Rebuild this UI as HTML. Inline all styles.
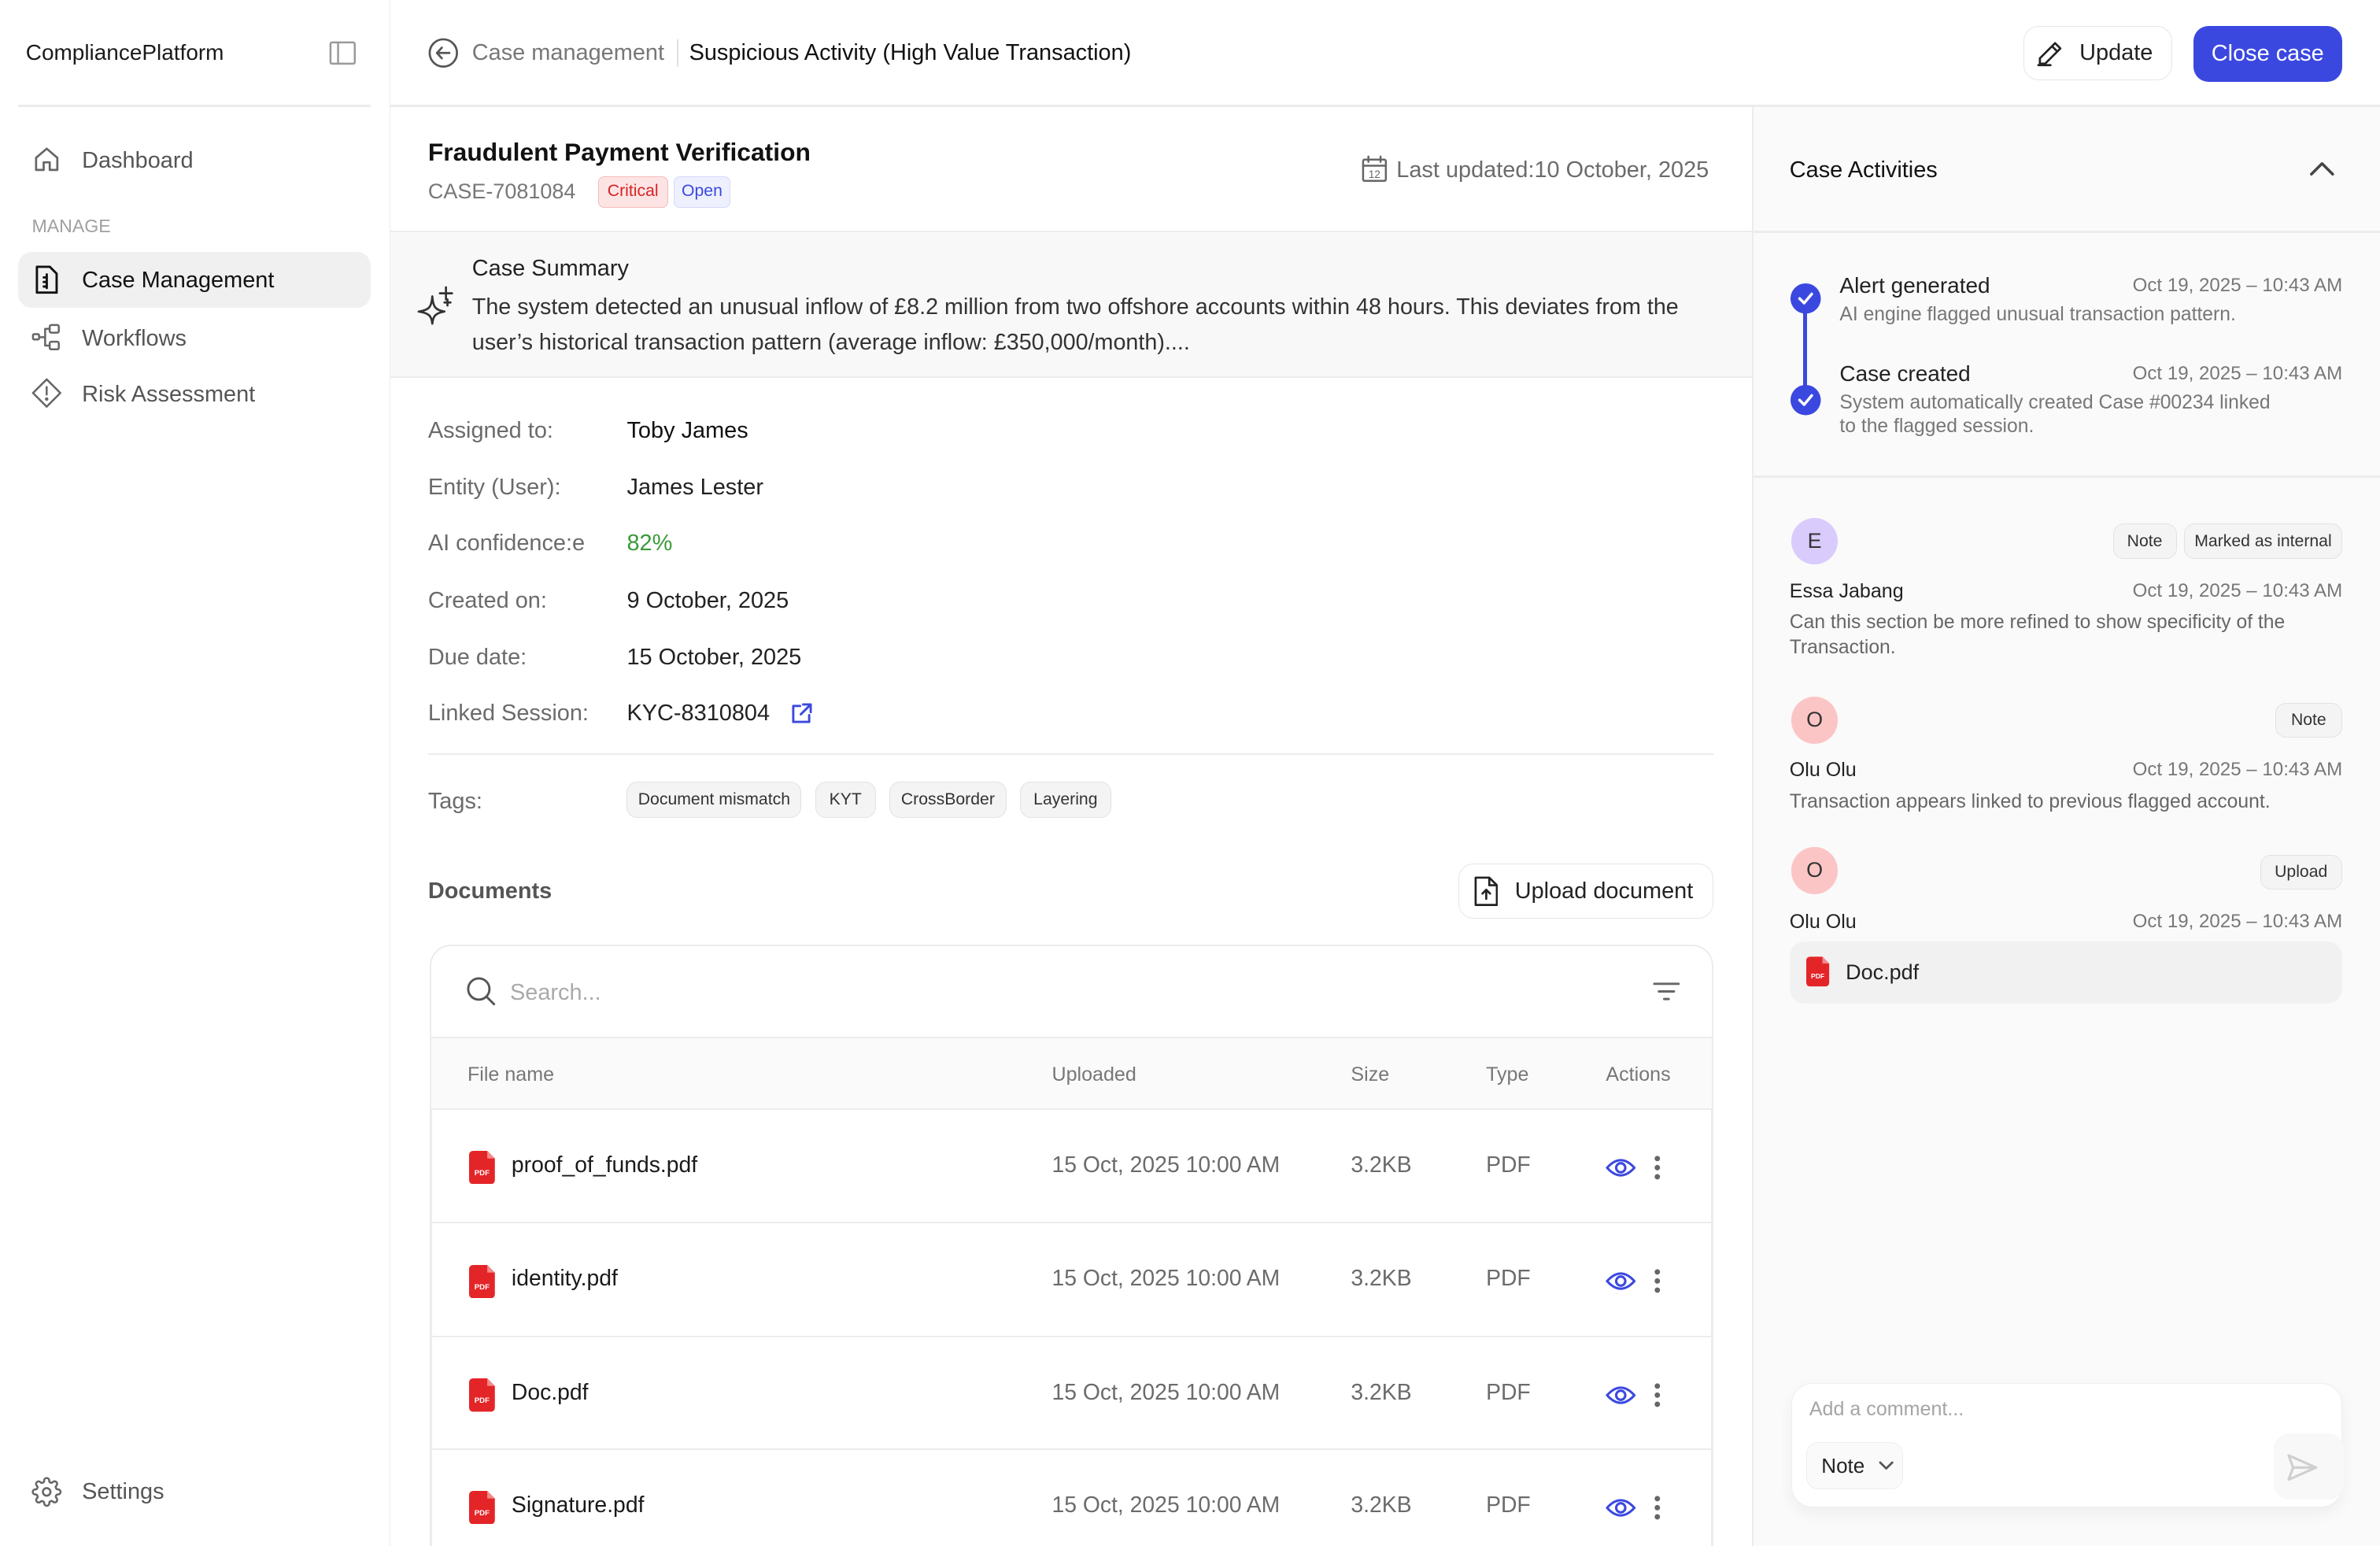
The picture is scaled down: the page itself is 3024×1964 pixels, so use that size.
<!DOCTYPE html>
<html><head><meta charset="utf-8"><style>
*{box-sizing:border-box;margin:0;padding:0}
html,body{width:3024px;height:1964px;overflow:hidden;background:#fff}
body{font-family:"Liberation Sans",sans-serif;color:#1a1a1a}
#r{zoom:1.92857;width:1568px;height:1019px;position:relative;overflow:hidden}
.a{position:absolute;white-space:nowrap}
.g{color:#6b6b6b}
.ts{font-size:12.5px !important}
.pill{position:absolute;border:1px solid #e2e2e2;background:#f4f4f4;border-radius:7px;font-size:11px;color:#333;display:flex;align-items:center;justify-content:center}
svg{position:absolute;fill:none;stroke-linecap:round;stroke-linejoin:round}
.row{position:absolute;left:283px;width:846px;height:75px;border-top:1.5px solid #ececec;background:#fff}
.row .a{top:0;line-height:73px;font-size:14.7px}
</style></head><body><div id="r">

<!-- sidebar -->
<div class="a" style="left:0;top:0;width:257px;height:1019px;border-right:1px solid #ececec"></div>
<div class="a" style="left:17px;top:25px;font-size:14.5px;line-height:20px;font-weight:500">CompliancePlatform</div>
<svg style="left:217px;top:27px" width="18" height="16" viewBox="0 0 18 16" stroke="#9a9a9a" stroke-width="1.3"><rect x="1" y="1" width="16" height="14" rx="1"/><line x1="6" y1="1" x2="6" y2="15"/></svg>
<div class="a" style="left:12px;top:69px;width:232px;height:1.5px;background:#ececec"></div>
<svg style="left:22px;top:96px" width="18" height="18" viewBox="0 0 18 18" stroke="#666" stroke-width="1.4"><path d="M2 8 L9 2 L16 8 V16 H11 V11 H7 V16 H2 Z"/></svg>
<div class="a g" style="left:54px;top:96px;font-size:15px;line-height:20px;color:#555">Dashboard</div>
<div class="a" style="left:21px;top:142px;font-size:12px;line-height:14px;color:#a0a0a0">MANAGE</div>
<div class="a" style="left:12px;top:166px;width:232px;height:37px;background:#f0f0f0;border-radius:9px"></div>
<svg style="left:23px;top:175px" width="16" height="19" viewBox="0 0 16 19" stroke="#111" stroke-width="1.5"><path d="M1.5 1 H10 L14.5 5.5 V18 H1.5 Z"/><path d="M8 6 V15 M6 8 H8 M6 11 H8 M6 14 H8"/></svg>
<div class="a" style="left:54px;top:175px;font-size:15px;line-height:20px;color:#111">Case Management</div>
<svg style="left:21px;top:213px" width="20" height="18" viewBox="0 0 20 18" stroke="#666" stroke-width="1.3"><rect x="1" y="7" width="4" height="3.5" rx="0.8"/><rect x="12" y="1" width="6" height="5" rx="1"/><rect x="12" y="12" width="6" height="5" rx="1"/><path d="M5 9 H9 M9 3.5 V14.5 M9 3.5 H12 M9 14.5 H12"/></svg>
<div class="a" style="left:54px;top:213px;font-size:15px;line-height:20px;color:#555">Workflows</div>
<svg style="left:21px;top:249px" width="20" height="20" viewBox="0 0 20 20" stroke="#666" stroke-width="1.3"><path d="M10 1 L19 10 L10 19 L1 10 Z"/><path d="M10 6 V11"/><circle cx="10" cy="14" r="0.5" fill="#666"/></svg>
<div class="a" style="left:54px;top:250px;font-size:15px;line-height:20px;color:#555">Risk Assessment</div>
<svg style="left:21px;top:973px" width="20" height="20" viewBox="0 0 24 24" stroke="#666" stroke-width="1.6"><circle cx="12" cy="12" r="3"/><path d="M19.4 15a1.65 1.65 0 0 0 .33 1.820l.06.06a2 2 0 1 1-2.83 2.83l-.06-.06a1.65 1.65 0 0 0-1.82-.33 1.65 1.65 0 0 0-1 1.51V21a2 2 0 1 1-4 0v-.09A1.65 1.65 0 0 0 9 19.4a1.65 1.65 0 0 0-1.82.33l-.06.06a2 2 0 1 1-2.83-2.83l.06-.06A1.65 1.65 0 0 0 4.68 15a1.65 1.65 0 0 0-1.51-1H3a2 2 0 1 1 0-4h.09A1.65 1.65 0 0 0 4.6 9a1.65 1.65 0 0 0-.33-1.82l-.06-.06a2 2 0 1 1 2.83-2.83l.06.06A1.65 1.65 0 0 0 9 4.68 1.65 1.65 0 0 0 10 3.17V3a2 2 0 1 1 4 0v.09a1.65 1.65 0 0 0 1 1.51 1.65 1.65 0 0 0 1.82-.33l.06-.06a2 2 0 1 1 2.83 2.83l-.06.06A1.65 1.65 0 0 0 19.4 9a1.65 1.65 0 0 0 1.51 1H21a2 2 0 1 1 0 4h-.09a1.65 1.65 0 0 0-1.51 1z"/></svg>
<div class="a" style="left:54px;top:973px;font-size:15px;line-height:20px;color:#555">Settings</div>

<!-- header -->
<div class="a" style="left:257px;top:69px;width:1311px;height:1.5px;background:#ececec"></div>
<svg style="left:282px;top:25px" width="20" height="20" viewBox="0 0 20 20" stroke="#555" stroke-width="1.4"><circle cx="10" cy="10" r="9"/><path d="M14 10 H6 M9 6.5 L5.8 10 L9 13.5"/></svg>
<div class="a" style="left:311px;top:25px;font-size:15px;line-height:20px;color:#777">Case management</div>
<div class="a" style="left:446px;top:26px;width:1px;height:18px;background:#e0e0e0"></div>
<div class="a" style="left:454px;top:25px;font-size:15px;line-height:20px;color:#111">Suspicious Activity (High Value Transaction)</div>
<div class="a" style="left:1333px;top:17px;width:98px;height:36px;border:1px solid #e6e6e6;border-radius:10px"></div>
<svg style="left:1342px;top:26px" width="19" height="18" viewBox="0 0 19 18" stroke="#222" stroke-width="1.4"><path d="M2 16 V12.5 L12 2.5 L15.5 6 L5.5 16 Z M10 4.5 L13.5 8 M1 17 H9"/></svg>
<div class="a" style="left:1370px;top:25px;font-size:15px;line-height:20px;color:#222">Update</div>
<div class="a" style="left:1445px;top:17px;width:98px;height:37px;background:#3b48df;border-radius:10px;color:#fff;font-size:15px;line-height:37px;text-align:center">Close case</div>

<!-- title -->
<div class="a" style="left:282px;top:89px;font-size:16.5px;line-height:22px;font-weight:600;color:#111">Fraudulent Payment Verification</div>
<div class="a" style="left:282px;top:117px;font-size:14px;line-height:18px;color:#777">CASE-7081084</div>
<div class="a" style="left:394px;top:116px;width:46px;height:21px;background:#fde4e4;border:1px solid #f6b9b9;border-radius:4px;color:#d32424;font-size:11px;line-height:19px;text-align:center">Critical</div>
<div class="a" style="left:444px;top:116px;width:37px;height:21px;background:#eef0fd;border:1px solid #d3d8fa;border-radius:4px;color:#3b48df;font-size:11px;line-height:19px;text-align:center">Open</div>
<svg style="left:897px;top:102px" width="17" height="18" viewBox="0 0 17 18" stroke="#666" stroke-width="1.3"><rect x="1" y="3" width="15" height="14" rx="1"/><path d="M1 7 H16 M4.5 1 V4.5 M12.5 1 V4.5"/><text x="8.5" y="15" font-size="7" fill="#666" stroke="none" text-anchor="middle" font-family="Liberation Sans">12</text></svg>
<div class="a" style="left:920px;top:102px;font-size:15px;line-height:20px;color:#6b6b6b">Last updated:10 October, 2025</div>

<!-- summary -->
<div class="a" style="left:257px;top:152px;width:897px;height:97px;background:#f8f8f8;border-top:1.5px solid #ececec;border-bottom:1.5px solid #ececec"></div>
<svg style="left:275px;top:188px" width="24" height="26" viewBox="0 0 24 26" stroke="#333" stroke-width="1.4"><path d="M10 7 C10.5 14 12 16 18 17 C12 18 10.5 20 10 25 C9.5 20 8 18 1 17 C8 16 9.5 14 10 7 Z"/><path d="M19 1 V9 M15 5 H23 M20 9 V13 M18 11 H22"/></svg>
<div class="a" style="left:311px;top:167px;font-size:15px;line-height:20px;color:#222">Case Summary</div>
<div class="a" style="left:311px;top:191px;font-size:14.9px;line-height:23px;color:#333;white-space:normal;width:820px">The system detected an unusual inflow of £8.2 million from two offshore accounts within 48 hours. This deviates from the user’s historical transaction pattern (average inflow: £350,000/month)....</div>

<!-- fields -->
<div class="a" style="left:282px;top:274px;font-size:15px;line-height:20px;color:#6b6b6b">Assigned to:</div>
<div class="a" style="left:413px;top:274px;font-size:15px;line-height:20px;color:#111">Toby James</div>
<div class="a" style="left:282px;top:311px;font-size:15px;line-height:20px;color:#6b6b6b">Entity (User):</div>
<div class="a" style="left:413px;top:311px;font-size:15px;line-height:20px;color:#222">James Lester</div>
<div class="a" style="left:282px;top:348px;font-size:15px;line-height:20px;color:#6b6b6b">AI confidence:e</div>
<div class="a" style="left:413px;top:348px;font-size:15px;line-height:20px;color:#3a9a3a">82%</div>
<div class="a" style="left:282px;top:386px;font-size:15px;line-height:20px;color:#6b6b6b">Created on:</div>
<div class="a" style="left:413px;top:386px;font-size:15px;line-height:20px;color:#222">9 October, 2025</div>
<div class="a" style="left:282px;top:423px;font-size:15px;line-height:20px;color:#6b6b6b">Due date:</div>
<div class="a" style="left:413px;top:423px;font-size:15px;line-height:20px;color:#222">15 October, 2025</div>
<div class="a" style="left:282px;top:460px;font-size:15px;line-height:20px;color:#6b6b6b">Linked Session:</div>
<div class="a" style="left:413px;top:460px;font-size:15px;line-height:20px;color:#222">KYC-8310804</div>
<svg style="left:521px;top:463px" width="14" height="14" viewBox="0 0 14 14" stroke="#3b48df" stroke-width="1.5"><path d="M6 2 H1.5 V12.5 H12 V8 M8 1 H13 V6 M13 1 L6.5 7.5"/></svg>
<div class="a" style="left:282px;top:496px;width:847px;height:1.5px;background:#ececec"></div>
<div class="a" style="left:282px;top:518px;font-size:15px;line-height:20px;color:#6b6b6b">Tags:</div>
<div class="pill" style="left:413px;top:515px;width:115px;height:24px">Document mismatch</div>
<div class="pill" style="left:537px;top:515px;width:40px;height:24px">KYT</div>
<div class="pill" style="left:586px;top:515px;width:77px;height:24px">CrossBorder</div>
<div class="pill" style="left:672px;top:515px;width:60px;height:24px">Layering</div>

<div class="a" style="left:282px;top:577px;font-size:15px;line-height:20px;color:#555;font-weight:600">Documents</div>
<div class="a" style="left:961px;top:569px;width:168px;height:36px;border:1px solid #e6e6e6;border-radius:10px"></div>
<svg style="left:971px;top:577px" width="16" height="20" viewBox="0 0 16 20" stroke="#222" stroke-width="1.4"><path d="M1 1 H10 L15 6 V19 H1 Z M10 1 V6 H15 M8 15 V9 M5.5 11.5 L8 9 L10.5 11.5"/></svg>
<div class="a" style="left:998px;top:577px;font-size:15px;line-height:20px;color:#222">Upload document</div>

<!-- table -->
<div class="a" style="left:283px;top:622px;width:846px;height:400px;border:1.5px solid #ececec;border-radius:14px 14px 0 0"></div>
<svg style="left:307px;top:643px" width="20" height="20" viewBox="0 0 20 20" stroke="#555" stroke-width="1.5"><circle cx="8.5" cy="8.5" r="7"/><path d="M13.5 13.5 L18.5 18.5"/></svg>
<div class="a" style="left:336px;top:644px;font-size:15px;line-height:20px;color:#aaa">Search...</div>
<svg style="left:1089px;top:646px" width="18" height="14" viewBox="0 0 18 14" stroke="#666" stroke-width="1.5"><path d="M1 2 H17 M4 7 H14 M7.5 12 H10.5"/></svg>
<div class="a" style="left:284px;top:683px;width:844px;height:48px;background:#fafafa;border-top:1.5px solid #ececec"></div>
<div class="a" style="left:308px;top:699px;font-size:13px;line-height:18px;color:#777">File name</div>
<div class="a" style="left:693px;top:699px;font-size:13px;line-height:18px;color:#777">Uploaded</div>
<div class="a" style="left:890px;top:699px;font-size:13px;line-height:18px;color:#777">Size</div>
<div class="a" style="left:979px;top:699px;font-size:13px;line-height:18px;color:#777">Type</div>
<div class="a" style="left:1058px;top:699px;font-size:13px;line-height:18px;color:#777">Actions</div>

<div class="row" style="top:730px"><svg style="left:26px;top:27px" width="18" height="22" viewBox="0 0 18 22"><path d="M3 0 H12 L17 5 V19 Q17 22 14 22 H3 Q0 22 0 19 V3 Q0 0 3 0 Z" fill="#e42528"/><path d="M12 0 V5 H17 Z" fill="#f38a8a"/><text x="8.5" y="16" font-size="5" font-weight="bold" fill="#fff" text-anchor="middle" font-family="Liberation Sans">PDF</text></svg><div class="a" style="left:54px">proof_of_funds.pdf</div><div class="a" style="left:410px;color:#6b6b6b">15 Oct, 2025 10:00 AM</div><div class="a" style="left:607px;color:#6b6b6b">3.2KB</div><div class="a" style="left:696px;color:#6b6b6b">PDF</div><svg style="left:775px;top:31px" width="20" height="14" viewBox="0 0 20 14" stroke="#3b48df" stroke-width="1.6"><path d="M1 7 Q10 -3 19 7 Q10 17 1 7 Z"/><circle cx="10" cy="7" r="3"/></svg><svg style="left:806px;top:29px" width="6" height="18" viewBox="0 0 6 18"><circle cx="3" cy="3" r="1.8" fill="#666"/><circle cx="3" cy="9" r="1.8" fill="#666"/><circle cx="3" cy="15" r="1.8" fill="#666"/></svg></div>
<div class="row" style="top:805px"><svg style="left:26px;top:27px" width="18" height="22" viewBox="0 0 18 22"><path d="M3 0 H12 L17 5 V19 Q17 22 14 22 H3 Q0 22 0 19 V3 Q0 0 3 0 Z" fill="#e42528"/><path d="M12 0 V5 H17 Z" fill="#f38a8a"/><text x="8.5" y="16" font-size="5" font-weight="bold" fill="#fff" text-anchor="middle" font-family="Liberation Sans">PDF</text></svg><div class="a" style="left:54px">identity.pdf</div><div class="a" style="left:410px;color:#6b6b6b">15 Oct, 2025 10:00 AM</div><div class="a" style="left:607px;color:#6b6b6b">3.2KB</div><div class="a" style="left:696px;color:#6b6b6b">PDF</div><svg style="left:775px;top:31px" width="20" height="14" viewBox="0 0 20 14" stroke="#3b48df" stroke-width="1.6"><path d="M1 7 Q10 -3 19 7 Q10 17 1 7 Z"/><circle cx="10" cy="7" r="3"/></svg><svg style="left:806px;top:29px" width="6" height="18" viewBox="0 0 6 18"><circle cx="3" cy="3" r="1.8" fill="#666"/><circle cx="3" cy="9" r="1.8" fill="#666"/><circle cx="3" cy="15" r="1.8" fill="#666"/></svg></div>
<div class="row" style="top:880px"><svg style="left:26px;top:27px" width="18" height="22" viewBox="0 0 18 22"><path d="M3 0 H12 L17 5 V19 Q17 22 14 22 H3 Q0 22 0 19 V3 Q0 0 3 0 Z" fill="#e42528"/><path d="M12 0 V5 H17 Z" fill="#f38a8a"/><text x="8.5" y="16" font-size="5" font-weight="bold" fill="#fff" text-anchor="middle" font-family="Liberation Sans">PDF</text></svg><div class="a" style="left:54px">Doc.pdf</div><div class="a" style="left:410px;color:#6b6b6b">15 Oct, 2025 10:00 AM</div><div class="a" style="left:607px;color:#6b6b6b">3.2KB</div><div class="a" style="left:696px;color:#6b6b6b">PDF</div><svg style="left:775px;top:31px" width="20" height="14" viewBox="0 0 20 14" stroke="#3b48df" stroke-width="1.6"><path d="M1 7 Q10 -3 19 7 Q10 17 1 7 Z"/><circle cx="10" cy="7" r="3"/></svg><svg style="left:806px;top:29px" width="6" height="18" viewBox="0 0 6 18"><circle cx="3" cy="3" r="1.8" fill="#666"/><circle cx="3" cy="9" r="1.8" fill="#666"/><circle cx="3" cy="15" r="1.8" fill="#666"/></svg></div>
<div class="row" style="top:954px"><svg style="left:26px;top:27px" width="18" height="22" viewBox="0 0 18 22"><path d="M3 0 H12 L17 5 V19 Q17 22 14 22 H3 Q0 22 0 19 V3 Q0 0 3 0 Z" fill="#e42528"/><path d="M12 0 V5 H17 Z" fill="#f38a8a"/><text x="8.5" y="16" font-size="5" font-weight="bold" fill="#fff" text-anchor="middle" font-family="Liberation Sans">PDF</text></svg><div class="a" style="left:54px">Signature.pdf</div><div class="a" style="left:410px;color:#6b6b6b">15 Oct, 2025 10:00 AM</div><div class="a" style="left:607px;color:#6b6b6b">3.2KB</div><div class="a" style="left:696px;color:#6b6b6b">PDF</div><svg style="left:775px;top:31px" width="20" height="14" viewBox="0 0 20 14" stroke="#3b48df" stroke-width="1.6"><path d="M1 7 Q10 -3 19 7 Q10 17 1 7 Z"/><circle cx="10" cy="7" r="3"/></svg><svg style="left:806px;top:29px" width="6" height="18" viewBox="0 0 6 18"><circle cx="3" cy="3" r="1.8" fill="#666"/><circle cx="3" cy="9" r="1.8" fill="#666"/><circle cx="3" cy="15" r="1.8" fill="#666"/></svg></div>
<div class="a" style="left:283px;top:730px;width:1.5px;height:300px;background:#ececec"></div>
<div class="a" style="left:1127.5px;top:730px;width:1.5px;height:300px;background:#ececec"></div>

<!-- right panel -->
<div class="a" style="left:1154px;top:70.5px;width:414px;height:950px;background:#fafafa;border-left:1.5px solid #ececec"></div>
<div class="a" style="left:1155px;top:152px;width:413px;height:1.5px;background:#ececec"></div>
<div class="a" style="left:1155px;top:313px;width:413px;height:1.5px;background:#ececec"></div>
<div class="a" style="left:1179px;top:102px;font-size:15px;line-height:20px;color:#111">Case Activities</div>
<svg style="left:1521px;top:105px" width="18" height="12" viewBox="0 0 18 12" stroke="#444" stroke-width="1.8"><path d="M2 10 L9 3 L16 10"/></svg>
<div class="a" style="left:1188px;top:198px;width:2.5px;height:64px;background:#3b48df"></div>
<svg style="left:1179px;top:186px" width="21" height="21" viewBox="0 0 21 21"><circle cx="10.5" cy="10.5" r="10" fill="#3b48df"/><path d="M6.5 10.5 L9.5 13.5 L14.5 7.5" stroke="#fff" stroke-width="1.8"/></svg>
<svg style="left:1179px;top:253px" width="21" height="21" viewBox="0 0 21 21"><circle cx="10.5" cy="10.5" r="10" fill="#3b48df"/><path d="M6.5 10.5 L9.5 13.5 L14.5 7.5" stroke="#fff" stroke-width="1.8"/></svg>
<div class="a" style="left:1212px;top:179px;font-size:14.5px;line-height:19px;color:#222">Alert generated</div>
<div class="a ts" style="left:1405px;top:180px;line-height:17px;color:#777">Oct 19, 2025 – 10:43 AM</div>
<div class="a" style="left:1212px;top:199px;font-size:12.8px;line-height:17px;color:#777">AI engine flagged unusual transaction pattern.</div>
<div class="a" style="left:1212px;top:237px;font-size:14.5px;line-height:19px;color:#222">Case created</div>
<div class="a ts" style="left:1405px;top:238px;line-height:17px;color:#777">Oct 19, 2025 – 10:43 AM</div>
<div class="a" style="left:1212px;top:257px;font-size:12.8px;line-height:17px;color:#777">System automatically created Case #00234 linked</div>
<div class="a" style="left:1212px;top:273px;font-size:12.8px;line-height:17px;color:#777">to the flagged session.</div>

<div class="a" style="left:1180px;top:341px;width:31px;height:31px;border-radius:50%;background:#d9cbfc;font-size:14px;line-height:31px;text-align:center;color:#333">E</div>
<div class="pill" style="left:1392px;top:345px;width:42px;height:23px">Note</div>
<div class="pill" style="left:1439px;top:345px;width:104px;height:23px">Marked as internal</div>
<div class="a" style="left:1179px;top:381px;font-size:13px;line-height:17px;color:#222">Essa Jabang</div>
<div class="a ts" style="left:1405px;top:381px;line-height:17px;color:#777">Oct 19, 2025 – 10:43 AM</div>
<div class="a" style="left:1179px;top:402px;font-size:12.8px;line-height:16.5px;color:#666">Can this section be more refined to show specificity of the<br>Transaction.</div>

<div class="a" style="left:1180px;top:459px;width:31px;height:31px;border-radius:50%;background:#fcc5c5;font-size:14px;line-height:31px;text-align:center;color:#333">O</div>
<div class="pill" style="left:1499px;top:463px;width:44px;height:23px">Note</div>
<div class="a" style="left:1179px;top:499px;font-size:13px;line-height:17px;color:#222">Olu Olu</div>
<div class="a ts" style="left:1405px;top:499px;line-height:17px;color:#777">Oct 19, 2025 – 10:43 AM</div>
<div class="a" style="left:1179px;top:520px;font-size:12.8px;line-height:17px;color:#666">Transaction appears linked to previous flagged account.</div>

<div class="a" style="left:1180px;top:558px;width:31px;height:31px;border-radius:50%;background:#fcc5c5;font-size:14px;line-height:31px;text-align:center;color:#333">O</div>
<div class="pill" style="left:1489px;top:563px;width:54px;height:23px">Upload</div>
<div class="a" style="left:1179px;top:599px;font-size:13px;line-height:17px;color:#222">Olu Olu</div>
<div class="a ts" style="left:1405px;top:599px;line-height:17px;color:#777">Oct 19, 2025 – 10:43 AM</div>
<div class="a" style="left:1179px;top:620px;width:364px;height:41px;border-radius:10px;background:#f1f1f1"></div>
<svg style="left:1190px;top:630px" width="16" height="20" viewBox="0 0 18 22"><path d="M3 0 H12 L17 5 V19 Q17 22 14 22 H3 Q0 22 0 19 V3 Q0 0 3 0 Z" fill="#e42528"/><path d="M12 0 V5 H17 Z" fill="#f38a8a"/><text x="8.5" y="16" font-size="5" font-weight="bold" fill="#fff" text-anchor="middle" font-family="Liberation Sans">PDF</text></svg>
<div class="a" style="left:1216px;top:631px;font-size:14px;line-height:19px;color:#222">Doc.pdf</div>

<div class="a" style="left:1180px;top:911px;width:363px;height:82px;background:#fff;border:1px solid #efefef;border-radius:14px;box-shadow:0 4px 10px rgba(0,0,0,0.05)"></div>
<div class="a" style="left:1192px;top:920px;font-size:13px;line-height:17px;color:#a5a5a5">Add a comment...</div>
<div class="a" style="left:1190px;top:950px;width:64px;height:31px;border:1px solid #eee;border-radius:8px;background:#fafafa"></div>
<div class="a" style="left:1200px;top:957px;font-size:13.5px;line-height:17px;color:#222">Note</div>
<svg style="left:1237px;top:962px" width="11" height="7" viewBox="0 0 11 7" stroke="#555" stroke-width="1.4"><path d="M1.5 1.5 L5.5 5.5 L9.5 1.5"/></svg>
<div class="a" style="left:1498px;top:944px;width:46px;height:44px;border-radius:10px;background:#f8f8f8"></div>
<svg style="left:1506px;top:957px" width="22" height="19" viewBox="0 0 22 19" stroke="#cfcfcf" stroke-width="1.6"><path d="M2 1.5 L20 9.5 L2 17.5 L5 9.5 Z M5 9.5 H20"/></svg>

</div></body></html>
